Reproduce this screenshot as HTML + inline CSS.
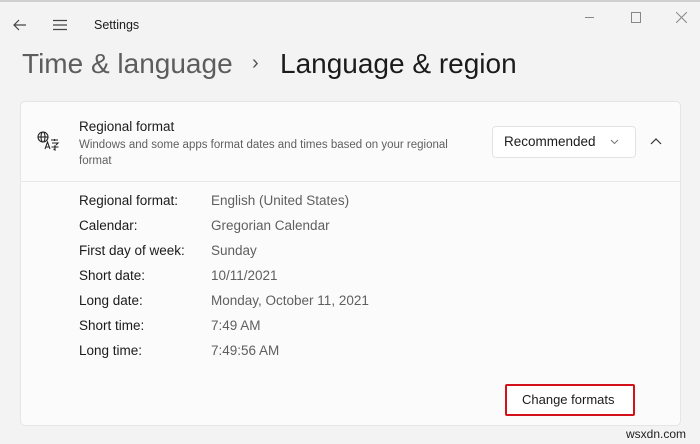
<!DOCTYPE html>
<html><head><style>
body{margin:0;width:700px;height:444px;background:#f3f3f3;font-family:"Liberation Sans",sans-serif;position:relative;overflow:hidden;color:#1b1b1b}
.a{position:absolute;white-space:nowrap}
.card{position:absolute;left:20px;top:101px;width:659px;height:323px;background:#fbfbfb;border:1px solid #e5e5e5;border-radius:5px}
.lbl{position:absolute;left:79px;font-size:13.5px;color:#1b1b1b}
.val{position:absolute;left:211px;font-size:13.5px;color:#5f5f5f}
</style></head><body>
<div style="position:absolute;left:0;top:0;width:700px;height:2px;background:#cfcfcf"></div>
<svg class="a" style="left:12px;top:18px" width="16" height="14"><path d="M14 7H2M7 2L2 7l5 5" stroke="#444" stroke-width="1.2" fill="none"/></svg>
<svg class="a" style="left:52px;top:18px" width="16" height="14"><path d="M1 2.5h14M1 7h14M1 11.5h14" stroke="#444" stroke-width="1.2"/></svg>
<div class="a" style="left:94px;top:18px;font-size:12.5px">Settings</div>
<div class="a" style="left:585px;top:17px;width:9px;height:1px;background:#888"></div>
<div class="a" style="left:631px;top:12px;width:8px;height:9px;border:1px solid #888"></div>
<svg class="a" style="left:676px;top:12px" width="11" height="11"><path d="M0 0L11 11M11 0L0 11" stroke="#888"/></svg>
<div class="a" style="left:22px;top:48px;font-size:28px;color:#5d5d5d">Time &amp; language</div>
<div class="a" style="left:252px;top:52px;font-size:20px;color:#555">›</div>
<div class="a" style="left:280px;top:48px;font-size:28px;color:#1b1b1b">Language &amp; region</div>
<div class="card"></div>
<div class="a" style="left:20px;top:181px;width:661px;height:1px;background:#e8e8e8"></div>
<svg class="a" style="left:37px;top:131px" width="24" height="22" fill="none" stroke="#222" stroke-width="1.1">
<circle cx="6" cy="6" r="5"/><ellipse cx="6" cy="6" rx="2" ry="5"/><path d="M1 6h10"/>
<path d="M8 18l2.5-7 2.5 7M9 16h3"/><path d="M14 9h7M17.5 8v2M15 12h6l-2 2M18 14v5l-1.5-1M14.5 16h7"/>
</svg>
<div class="a" style="left:79px;top:119px;font-size:13.5px">Regional format</div>
<div class="a" style="left:79px;top:137px;font-size:11.5px;color:#606060;line-height:16px;white-space:normal;width:400px">Windows and some apps format dates and times based on your regional format</div>
<div class="a" style="left:492px;top:126px;width:142px;height:30px;background:#fff;border:1px solid #e3e3e3;border-radius:4px"></div>
<div class="a" style="left:504px;top:134px;font-size:13.5px">Recommended</div>
<svg class="a" style="left:610px;top:139px" width="9" height="6"><path d="M1 1l3.5 3.5L8 1" stroke="#777" fill="none"/></svg>
<svg class="a" style="left:650px;top:138px" width="12" height="7"><path d="M1 6l5-5 5 5" stroke="#333" fill="none" stroke-width="1.2"/></svg>
<div class="lbl" style="top:193px">Regional format:</div><div class="val" style="top:193px">English (United States)</div>
<div class="lbl" style="top:218px">Calendar:</div><div class="val" style="top:218px">Gregorian Calendar</div>
<div class="lbl" style="top:243px">First day of week:</div><div class="val" style="top:243px">Sunday</div>
<div class="lbl" style="top:268px">Short date:</div><div class="val" style="top:268px">10/11/2021</div>
<div class="lbl" style="top:293px">Long date:</div><div class="val" style="top:293px">Monday, October 11, 2021</div>
<div class="lbl" style="top:318px">Short time:</div><div class="val" style="top:318px">7:49 AM</div>
<div class="lbl" style="top:343px">Long time:</div><div class="val" style="top:343px">7:49:56 AM</div>
<div class="a" style="left:505px;top:384px;width:126px;height:28px;background:#fff;border:2px solid #d4101a;border-radius:2px"></div>
<div class="a" style="left:522px;top:392px;font-size:13px">Change formats</div>
<div class="a" style="left:626px;top:427px;font-size:12px;color:#222">wsxdn.com</div>
</body></html>
